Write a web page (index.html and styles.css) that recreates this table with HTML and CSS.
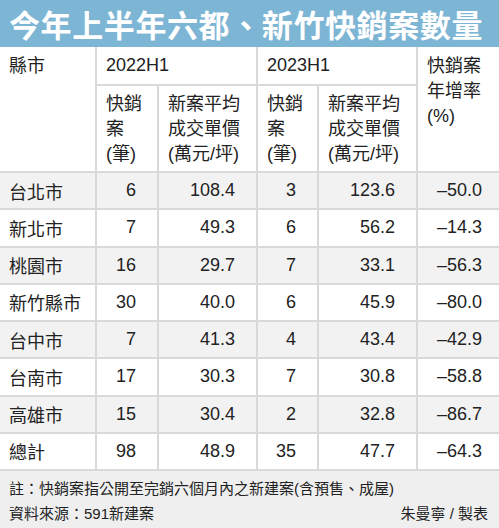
FILE: index.html
```html
<!DOCTYPE html>
<html lang="zh-Hant">
<head>
<meta charset="utf-8">
<link rel="stylesheet" href="styles.css">
</head>
<body>
<div class="chart">
  <h1 class="title">今年上半年六都、新竹快銷案數量</h1>
  <table class="data">
    <colgroup>
      <col class="c1"><col class="c2"><col class="c3"><col class="c4"><col class="c5"><col class="c6">
    </colgroup>
    <thead>
      <tr class="h1">
        <th rowspan="2" class="top">縣市</th>
        <th colspan="2">2022H1</th>
        <th colspan="2">2023H1</th>
        <th rowspan="2" class="top">快銷案<br>年增率<br>(%)</th>
      </tr>
      <tr class="h2">
        <th>快銷<br>案<br>(筆)</th>
        <th>新案平均<br>成交單價<br>(萬元/坪)</th>
        <th>快銷<br>案<br>(筆)</th>
        <th>新案平均<br>成交單價<br>(萬元/坪)</th>
      </tr>
    </thead>
    <tbody>
      <tr class="alt"><td>台北市</td><td>6</td><td>108.4</td><td>3</td><td>123.6</td><td>–50.0</td></tr>
      <tr><td>新北市</td><td>7</td><td>49.3</td><td>6</td><td>56.2</td><td>–14.3</td></tr>
      <tr class="alt"><td>桃園市</td><td>16</td><td>29.7</td><td>7</td><td>33.1</td><td>–56.3</td></tr>
      <tr><td>新竹縣市</td><td>30</td><td>40.0</td><td>6</td><td>45.9</td><td>–80.0</td></tr>
      <tr class="alt"><td>台中市</td><td>7</td><td>41.3</td><td>4</td><td>43.4</td><td>–42.9</td></tr>
      <tr><td>台南市</td><td>17</td><td>30.3</td><td>7</td><td>30.8</td><td>–58.8</td></tr>
      <tr class="alt"><td>高雄市</td><td>15</td><td>30.4</td><td>2</td><td>32.8</td><td>–86.7</td></tr>
      <tr><td>總計</td><td>98</td><td>48.9</td><td>35</td><td>47.7</td><td>–64.3</td></tr>
    </tbody>
  </table>
  <div class="foot">
    <p class="note">註：快銷案指公開至完銷六個月內之新建案(含預售、成屋)</p>
    <div class="src">
      <span>資料來源：591新建案</span>
      <span>朱曼寧 / 製表</span>
    </div>
  </div>
</div>
</body>
</html>
```
FILE: styles.css
```css
html, body {
  margin: 0;
  padding: 0;
  background: #ffffff;
}
.chart {
  width: 499px;
  height: 528px;
  font-family: "Liberation Sans", "Noto Sans CJK TC", sans-serif;
  color: #222222;
  overflow: hidden;
}
.title {
  margin: 0;
  height: 47px;
  background: #7db5d4;
  color: #ffffff;
  font-family: "Noto Sans CJK TC", sans-serif;
  font-weight: 700;
  font-size: 31px;
  line-height: 47px;
  letter-spacing: 0.6px;
  padding-left: 9px;
  white-space: nowrap;
}
.data {
  width: 499px;
  border-collapse: collapse;
  table-layout: fixed;
  font-size: 18px;
}
.c1 { width: 96px; }
.c2 { width: 62px; }
.c3 { width: 99px; }
.c4 { width: 61px; }
.c5 { width: 99px; }
.c6 { width: 82px; }
.data th, .data td {
  border: 2px solid #d9d9d9;
  padding: 0;
}
.data tr > :first-child { border-left: none; }
.data tr > :last-child { border-right: none; }
.data thead tr:first-child th { border-top: none; }
.data th {
  font-weight: normal;
  text-align: left;
  padding-left: 9px;
  line-height: 25px;
}
.h1 th {
  height: 37px;
  vertical-align: middle;
}
.h1 th.top {
  vertical-align: top;
  padding-top: 7px;
}
.h2 th {
  height: 84px;
  vertical-align: middle;
  padding-top: 1px;
}
.data td {
  height: 35.25px;
  text-align: right;
  padding-right: 21px;
  vertical-align: middle;
}
.data td:first-child {
  text-align: left;
  padding-left: 9px;
  padding-right: 0;
  white-space: nowrap;
}
.data td:last-child {
  padding-right: 17px;
}
.data tbody tr.alt {
  background: #f2f2f2;
}
.foot {
  background: #efefef;
  height: 58px;
  font-size: 15px;
  line-height: 25px;
  padding: 5px 11px 0 9px;
  box-sizing: border-box;
}
.note {
  margin: 0;
  white-space: nowrap;
}
.src {
  display: flex;
  justify-content: space-between;
}
```
